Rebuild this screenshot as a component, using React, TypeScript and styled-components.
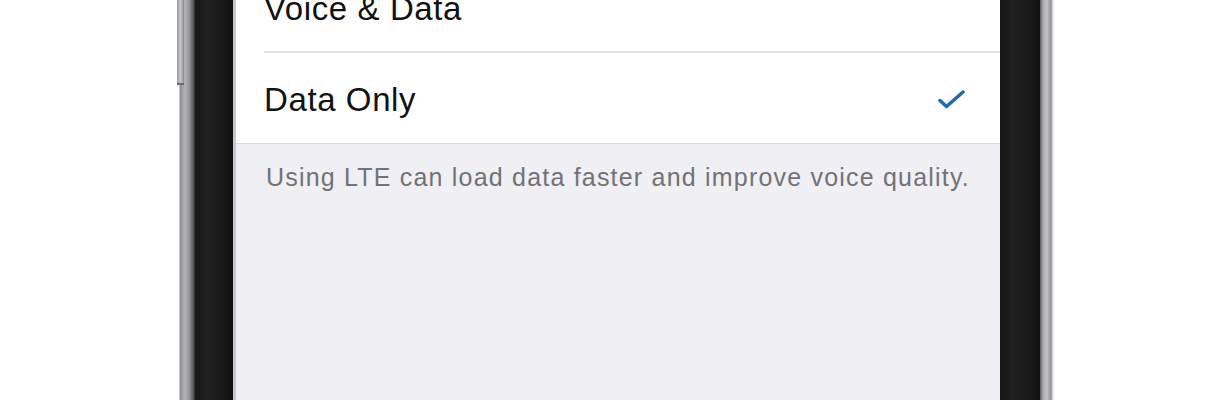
import React, { FC } from 'react';
import styled, { createGlobalStyle } from 'styled-components';

const GlobalStyle = createGlobalStyle`
  html, body {
    margin: 0;
    padding: 0;
    background: #ffffff;
    overflow: hidden;
  }
  body {
    font-family: 'Liberation Sans', Arial, sans-serif;
  }
`;

interface OptionRowProps {
  label: string;
  checked?: boolean;
  divider?: boolean;
}

const OptionRow: FC<OptionRowProps> = ({ label, checked, divider }) => {
  return (
    <Row>
      <RowInner divider={!!divider}>
        <Label>{label}</Label>
        {checked && (
          <Check width="27" height="19" viewBox="0 0 27 19">
            <path d="M2 10.5 L8.5 16.5 L25 2" />
          </Check>
        )}
      </RowInner>
    </Row>
  );
};

export default function App() {
  return (
    <>
      <GlobalStyle />
      <Page>
        <Phone>
          <LeftEdge>
            <VolumeKey />
          </LeftEdge>
          <Bezel width={38} />
          <Screen>
            <Group>
              <OptionRow label="Voice & Data" divider />
              <OptionRow label="Data Only" checked />
            </Group>
            <Footer>Using LTE can load data faster and improve voice quality.</Footer>
          </Screen>
          <Bezel width={40} />
          <RightEdge />
        </Phone>
      </Page>
    </>
  );
}

const Page = styled.div`
  width: 1230px;
  height: 400px;
  display: flex;
  padding-left: 177px;
  box-sizing: border-box;
  background: #ffffff;
`;

const Phone = styled.div`
  display: flex;
  height: 400px;
`;

const LeftEdge = styled.div`
  width: 18px;
  display: flex;
  flex-direction: column;
  background: linear-gradient(
    to right,
    #ffffff 0px,
    #ffffff 2px,
    #8d8d92 3px,
    #b4b4b8 8px,
    #9a9a9e 12px,
    #5e5e62 16px,
    #2a2a2c 18px
  );
`;

const VolumeKey = styled.div`
  width: 7px;
  height: 83px;
  background: linear-gradient(to right, #9c9ca0, #c9c9cc 50%, #8a8a8e);
  border-bottom: 2px solid #6c6c70;
`;

const Bezel = styled.div<{ width: number }>`
  width: ${({ width }) => `${width}px`};
  background: linear-gradient(
    to right,
    #161617 0%,
    #202021 30%,
    #1a1a1b 70%,
    #111112 100%
  );
`;

const RightEdge = styled.div`
  width: 15px;
  background: linear-gradient(
    to right,
    #5a5a5e 0px,
    #a9a9ad 3px,
    #c4c4c7 7px,
    #8e8e92 11px,
    #e8e8ea 13px,
    #ffffff 15px
  );
`;

const Screen = styled.div`
  width: 767px;
  height: 400px;
  background: #efeff4;
  display: flex;
  flex-direction: column;
  overflow: hidden;
  border-left: 3px solid #c8c8cc;
  box-sizing: border-box;
`;

const Group = styled.div`
  margin-top: -37px;
  background: #ffffff;
  border-bottom: 1px solid #dadade;
`;

const Row = styled.div`
  height: 90px;
  padding-left: 28px;
  display: flex;
`;

const RowInner = styled.div<{ divider: boolean }>`
  flex: 1;
  display: flex;
  align-items: center;
  justify-content: space-between;
  padding: 2px 35px 0 0;
  border-bottom: ${({ divider }) => (divider ? '2px solid #e2e2e5' : 'none')};
  box-sizing: border-box;
`;

const Label = styled.span`
  font-size: 33px;
  line-height: 33px;
  letter-spacing: 0.6px;
  color: #111111;
`;

const Check = styled.svg`
  fill: none;
  stroke: #2468b4;
  stroke-width: 3.5;
  stroke-linecap: round;
  stroke-linejoin: round;
`;

const Footer = styled.div`
  padding: 18px 0 0 30px;
  font-size: 25px;
  line-height: 30px;
  letter-spacing: 1.2px;
  color: #727277;
  white-space: nowrap;
`;
